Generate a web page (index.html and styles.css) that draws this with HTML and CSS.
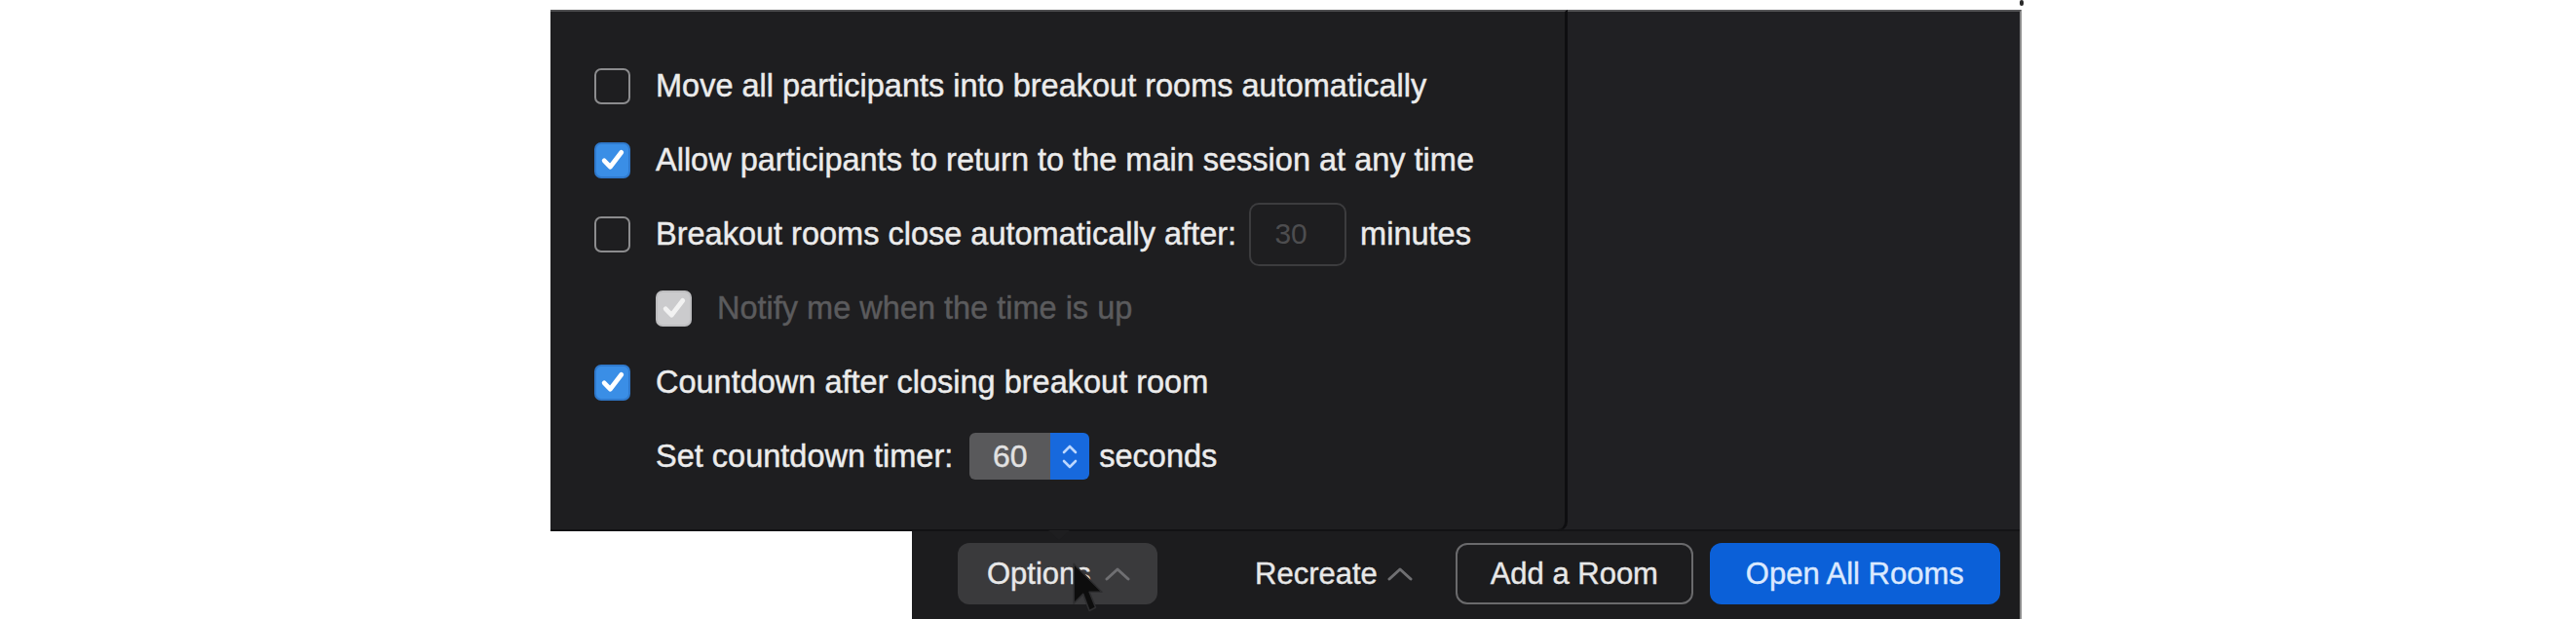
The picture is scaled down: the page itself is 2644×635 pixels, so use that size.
FILE: index.html
```html
<!DOCTYPE html>
<html lang="en">
<head>
<meta charset="utf-8">
<title>Breakout Rooms Options</title>
<link rel="stylesheet" href="styles.css">
</head>
<body>
<div class="stage">
  <span class="corner-mark"></span>
  <div class="window">
    <div class="window-body"></div>
    <div class="bottom-bar">
      <button class="btn btn-options">Options<svg class="caret" viewBox="0 0 26 14"><path d="M2 12 L13 2 L24 12"/></svg></button>
      <button class="btn btn-text">Recreate<svg class="caret" viewBox="0 0 26 14"><path d="M2 12 L13 2 L24 12"/></svg></button>
      <button class="btn btn-outline">Add a Room</button>
      <button class="btn btn-primary">Open All Rooms</button>
    </div>
  </div>

  <div class="popover">
    <div class="row">
      <span class="cb"></span>
      <span class="label">Move all participants into breakout rooms automatically</span>
    </div>
    <div class="row">
      <span class="cb cb-checked"><svg viewBox="0 0 20 20"><path d="M4.5 10.5 L8.3 14.5 L15.5 5.2"/></svg></span>
      <span class="label">Allow participants to return to the main session at any time</span>
    </div>
    <div class="row">
      <span class="cb"></span>
      <span class="label">Breakout rooms close automatically after:</span>
      <span class="num-input">30</span>
      <span class="label">minutes</span>
    </div>
    <div class="row row-indent">
      <span class="cb cb-disabled"><svg viewBox="0 0 20 20"><path d="M4.5 10.5 L8.3 14.5 L15.5 5.2"/></svg></span>
      <span class="label label-disabled">Notify me when the time is up</span>
    </div>
    <div class="row">
      <span class="cb cb-checked"><svg viewBox="0 0 20 20"><path d="M4.5 10.5 L8.3 14.5 L15.5 5.2"/></svg></span>
      <span class="label">Countdown after closing breakout room</span>
    </div>
    <div class="row row-indent">
      <span class="label">Set countdown timer:</span>
      <span class="stepper">
        <span class="stepper-value">60</span>
        <span class="stepper-arrows"><svg viewBox="0 0 40 48"><path d="M14 20 L20 14 L26 20"/><path d="M14 29 L20 35 L26 29"/></svg></span>
      </span>
      <span class="label label-seconds">seconds</span>
    </div>
  </div>

  <svg class="cursor" viewBox="0 0 30 50"><path d="M2 2 L2 40 L11 31 L17 47 L23 44 L17 29 L29 29 Z"/></svg>
</div>
</body>
</html>
```

FILE: styles.css
```css
* { box-sizing: border-box; }

html, body {
  margin: 0;
  padding: 0;
  background: #ffffff;
}

body {
  width: 2644px;
  height: 635px;
  overflow: hidden;
  font-family: "Liberation Sans", Arial, sans-serif;
  color: #ececec;
}

.stage {
  position: relative;
  height: 635px;
  padding-top: 10px;
}

.corner-mark {
  position: absolute;
  left: 2073px;
  top: 0;
  width: 4px;
  height: 6px;
  border-radius: 2px;
  background: #2a2a2a;
}

/* main window */
.window {
  margin-left: 936px;
  width: 1139px;
  height: 625px;
  background: #1c1c1e;
  border-top: 2px solid #555557;
  border-right: 2px solid #8a8a8a;
  display: flex;
  flex-direction: column;
}

.window-body {
  height: 533px;
  background: #202023;
  border-bottom: 2px solid #141416;
}

.bottom-bar {
  display: flex;
  align-items: flex-start;
  padding: 12px 0 0 47px;
}

.btn {
  height: 63px;
  font-family: "Liberation Sans", Arial, sans-serif;
  font-size: 31px;
  color: #e8e8e8;
  -webkit-text-stroke: 0.4px currentColor;
  border: none;
  background: transparent;
  display: flex;
  align-items: center;
  justify-content: center;
  padding: 0;
  border-radius: 12px;
}

.caret {
  width: 26px;
  height: 14px;
  margin-left: 14px;
  fill: none;
  stroke: #6f6f72;
  stroke-width: 3;
  stroke-linecap: round;
  stroke-linejoin: round;
}

.btn-options {
  width: 205px;
  background: #3a3a3c;
  justify-content: flex-start;
  padding-left: 30px;
}

.btn-text {
  margin-left: 100px;
  justify-content: flex-start;
}

.btn-text .caret {
  margin-left: 10px;
}

.btn-outline {
  margin-left: 44px;
  width: 244px;
  border: 2px solid #6a6a6c;
}

.btn-primary {
  margin-left: 17px;
  width: 298px;
  background: #0b60d8;
  color: #dbe9ff;
}

/* popover */
.popover {
  position: absolute;
  left: 565px;
  top: 10px;
  width: 1044px;
  height: 535px;
  background: #1e1e20;
  border-top: 2px solid #4d4d4f;
  border-right: 3px solid #0e0e10;
  border-bottom: 2px solid #121214;
  border-bottom-right-radius: 10px;
  padding: 38px 0 0 45px;
}

.popover::after {
  content: "";
  position: absolute;
  left: 511px;
  bottom: -11px;
  border-left: 11px solid transparent;
  border-right: 11px solid transparent;
  border-top: 10px solid #1e1e20;
}

.row {
  height: 76px;
  display: flex;
  align-items: center;
  gap: 26px;
}

.row-indent {
  padding-left: 63px;
}

.label {
  font-size: 32.5px;
  line-height: 1;
  white-space: nowrap;
  color: #ececec;
  -webkit-text-stroke: 0.45px currentColor;
}

.label-disabled {
  color: #5b5b5d;
}

.cb {
  width: 37px;
  height: 37px;
  flex: none;
  border: 2.5px solid #8c8c8e;
  border-radius: 7px;
  display: flex;
  align-items: center;
  justify-content: center;
}

.cb svg {
  width: 32px;
  height: 32px;
  fill: none;
  stroke: #ffffff;
  stroke-width: 3;
  stroke-linecap: round;
  stroke-linejoin: round;
}

.cb-checked {
  background: #3a8ee6;
  border-color: #2f79cc;
}

.cb-disabled {
  background: #cbcbcd;
  border-color: #bdbdbf;
}

.cb-disabled svg {
  stroke: #f2f2f2;
}

.num-input {
  width: 100px;
  height: 65px;
  margin-left: -13px;
  margin-right: -12px;
  border: 2px solid #3c3c3e;
  border-radius: 10px;
  display: flex;
  align-items: center;
  justify-content: center;
  padding-right: 14px;
  font-size: 30px;
  color: #4d4d4f;
}

.stepper {
  display: flex;
  height: 48px;
  margin-left: -9px;
}

.stepper-value {
  width: 83px;
  background: #59595b;
  border-radius: 6px 0 0 6px;
  display: flex;
  align-items: center;
  justify-content: center;
  font-size: 32px;
  color: #e2e2e2;
  -webkit-text-stroke: 0.4px currentColor;
}

.stepper-arrows {
  width: 40px;
  background: #1769dd;
  border-radius: 0 6px 6px 0;
  display: flex;
}

.stepper-arrows svg {
  width: 40px;
  height: 48px;
  fill: none;
  stroke: #bcd7ff;
  stroke-width: 2.6;
  stroke-linecap: round;
  stroke-linejoin: round;
}

.label-seconds {
  margin-left: -16px;
}

/* mouse pointer */
.cursor {
  position: absolute;
  left: 1100px;
  top: 576px;
  width: 32px;
  height: 54px;
  fill: #0d0d0d;
  stroke: #2e2e30;
  stroke-width: 1.5;
  stroke-linejoin: round;
}
```
